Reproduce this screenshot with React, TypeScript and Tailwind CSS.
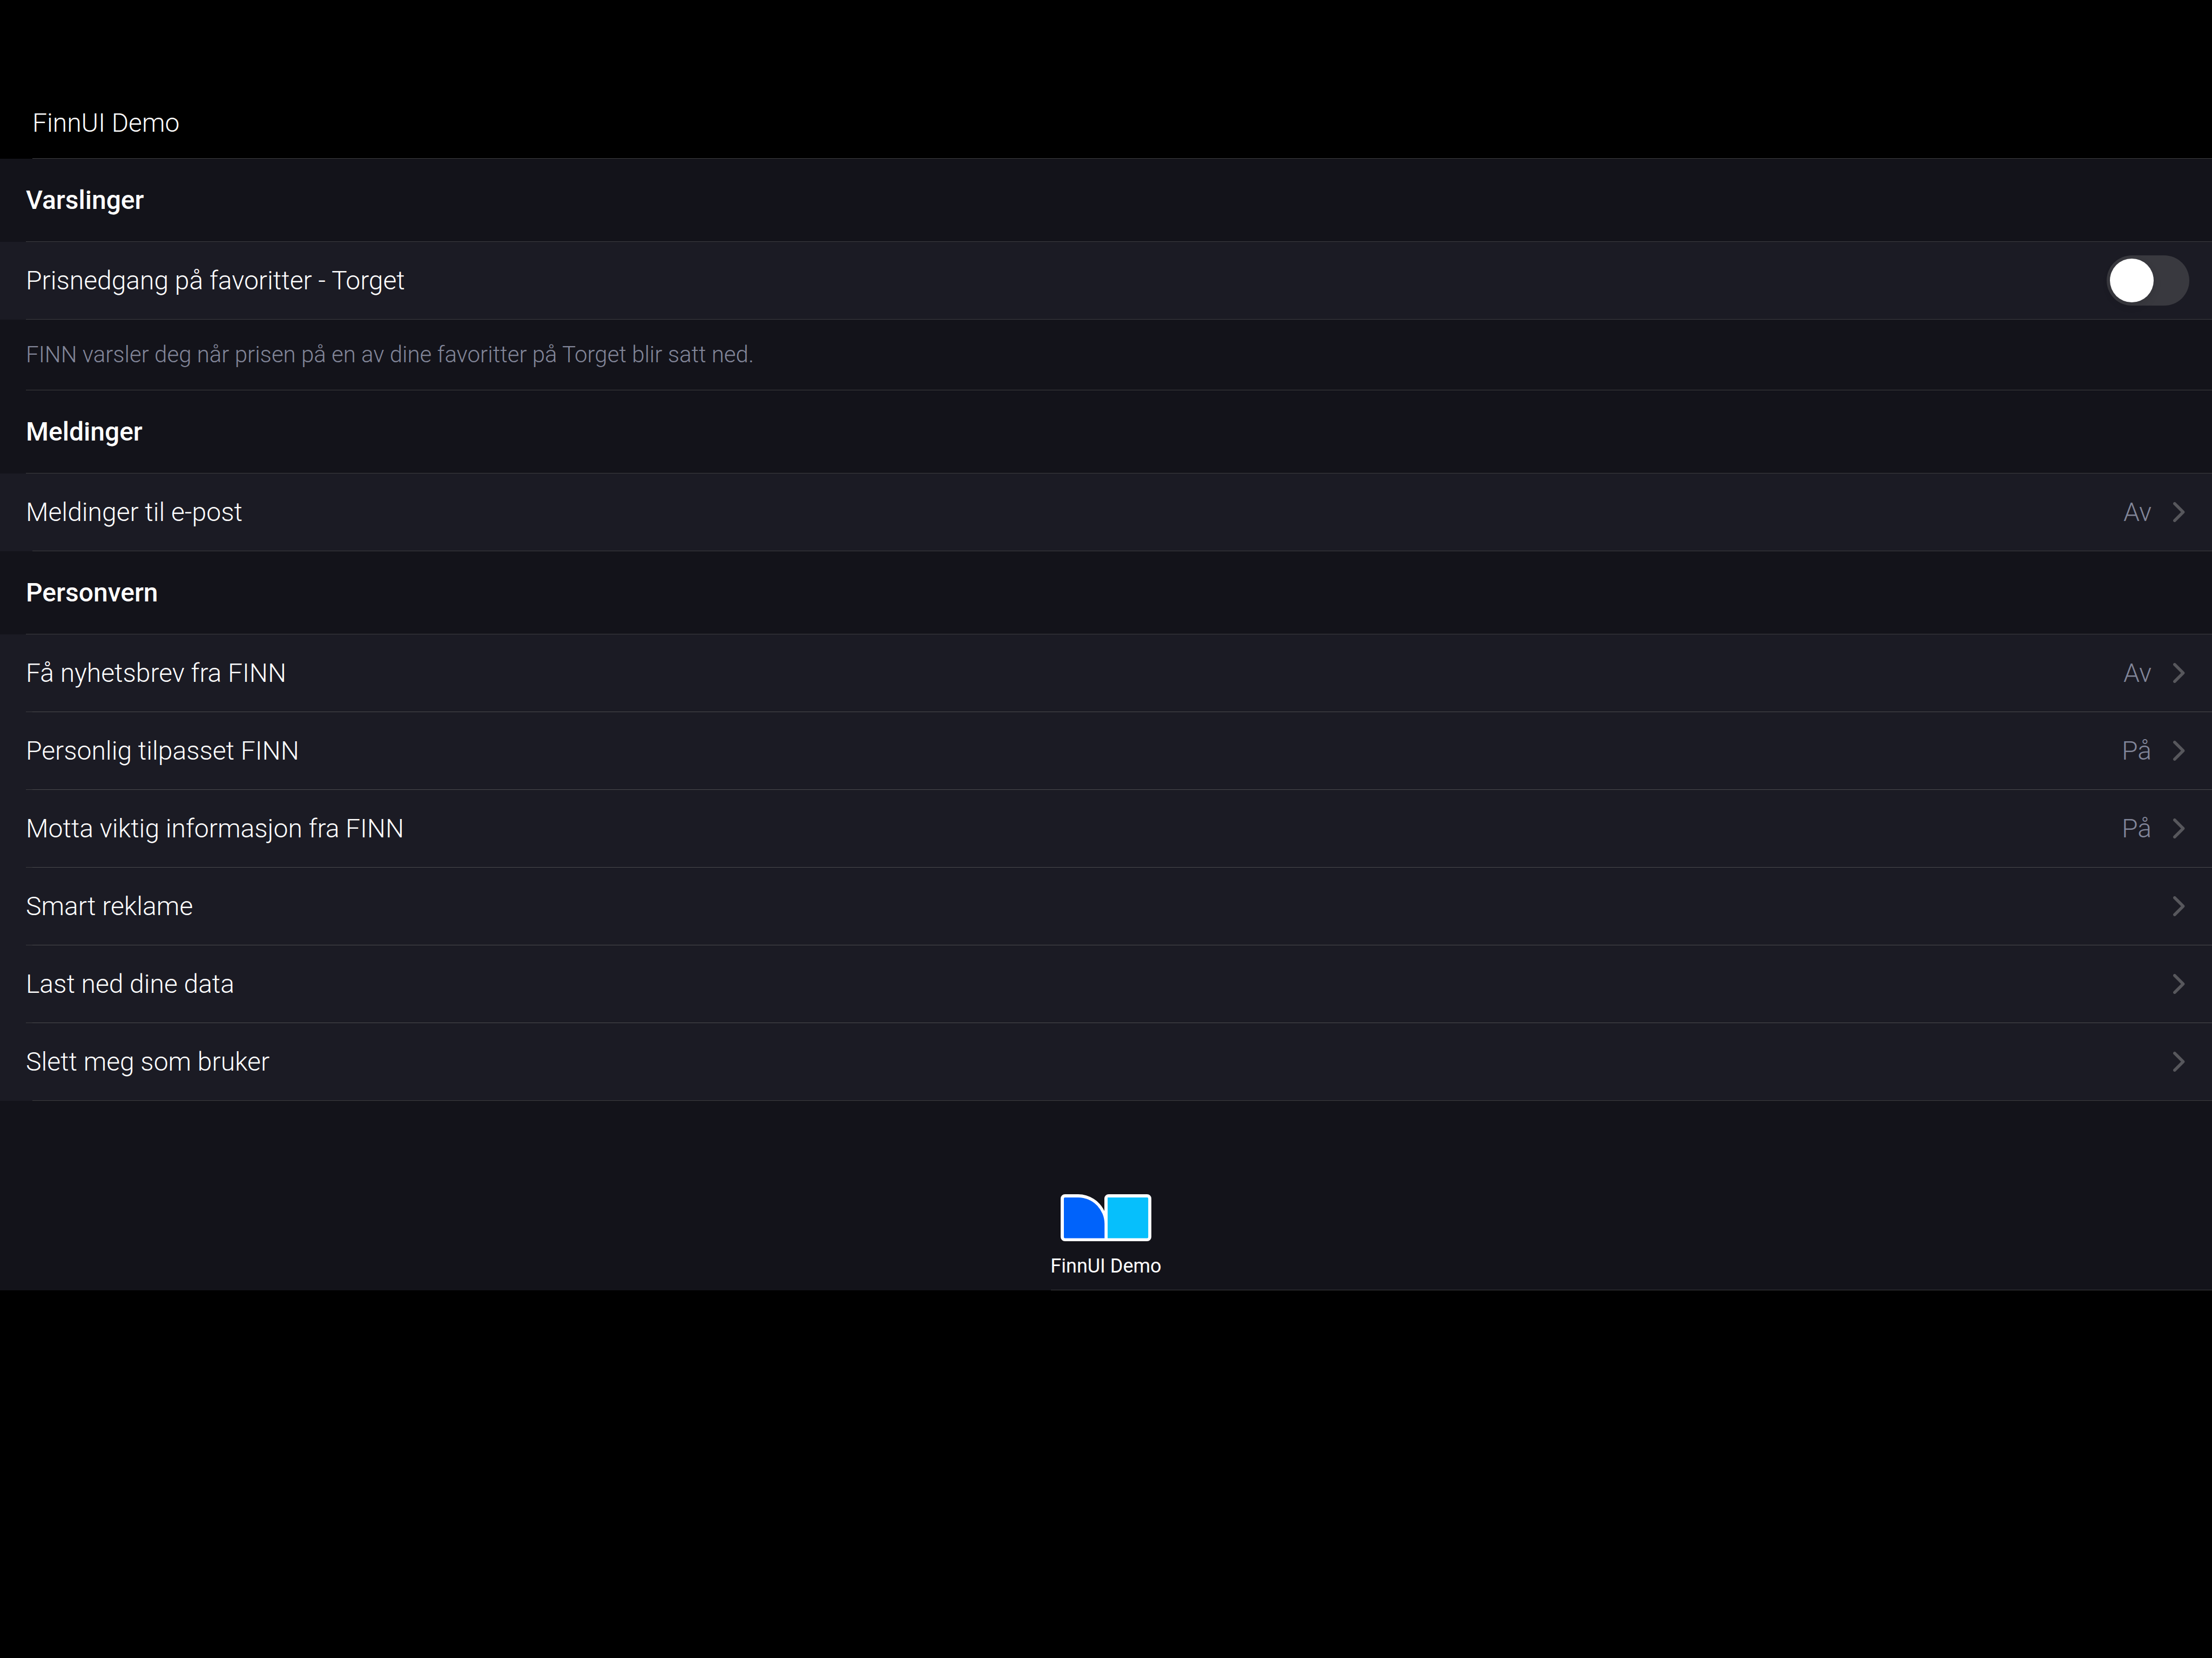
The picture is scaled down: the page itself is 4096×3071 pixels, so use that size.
import React from "react";

type Item = { label: string; value?: string };

const privacyItems: Item[] = [
  { label: "Få nyhetsbrev fra FINN", value: "Av" },
  { label: "Personlig tilpasset FINN", value: "På" },
  { label: "Motta viktig informasjon fra FINN", value: "På" },
  { label: "Smart reklame" },
  { label: "Last ned dine data" },
  { label: "Slett meg som bruker" },
];

function Chevron() {
  return (
    <svg viewBox="0 0 22 37" className="h-[37px] w-[22px] shrink-0" fill="none" aria-hidden="true">
      <path
        d="M2.8 2.8 18.6 18.5 2.8 34.2"
        stroke="#57575c"
        strokeWidth="5.5"
        strokeLinecap="round"
        strokeLinejoin="round"
      />
    </svg>
  );
}

/* Hairline under a section title or a plain row */
function Divider() {
  return <div className="ml-12 h-px bg-[#3d3d40]" />;
}

/* Hairline with the wider inset, used at the end of a group */
function InsetDivider() {
  return <div className="ml-[60px] h-px bg-[#3d3d40]" />;
}

/* Two overlapping hairlines between neighbouring rows */
function RowDivider() {
  return (
    <div className="ml-12 h-px bg-[#3d3d40]">
      <div className="ml-3 h-px bg-[#4b4b4e]" />
    </div>
  );
}

function SectionTitle({ children }: { children: React.ReactNode }) {
  return (
    <>
      <h2 className="flex h-[153px] items-center px-12 text-5xl leading-[60px] font-medium">{children}</h2>
      <Divider />
    </>
  );
}

function Row({ item, last }: { item: Item; last?: boolean }) {
  return (
    <li className="bg-[#1b1b24]">
      <button
        type="button"
        className="flex h-[143px] w-full items-center gap-10 pr-[50px] pl-12 text-left text-5xl leading-[60px] font-light"
      >
        <span className="grow">{item.label}</span>
        {item.value && <span className="text-[#828699]">{item.value}</span>}
        <Chevron />
      </button>
      {last ? <InsetDivider /> : <RowDivider />}
    </li>
  );
}

function Logo() {
  return (
    <svg viewBox="0 0 168 87" className="h-[87px] w-[168px]" aria-hidden="true">
      <path
        fill="#fff"
        d="M8 0H32.5A54.5 54.5 0 0 1 81 31V8A8 8 0 0 1 89 0H160A8 8 0 0 1 168 8V79A8 8 0 0 1 160 87H8A8 8 0 0 1 0 79V8A8 8 0 0 1 8 0Z"
      />
      <path fill="#0063fb" d="M8 6H32.5A49 49 0 0 1 81.3 55V81.5H8A2 2 0 0 1 6 79.5V8A2 2 0 0 1 8 6Z" />
      <path fill="#06bffc" d="M87 6H160A2 2 0 0 1 162.2 8V79.5A2 2 0 0 1 160 81.5H87Z" />
    </svg>
  );
}

export default function App() {
  return (
    <div className="min-h-screen bg-black font-['Roboto','Liberation_Sans',sans-serif] text-white">
      <header className="pt-[162px]">
        <h1 className="flex h-[131px] items-center px-[60px] text-5xl leading-[60px] font-light">FinnUI Demo</h1>
        <InsetDivider />
      </header>

      <main className="bg-[#13131a]">
        <section>
          <SectionTitle>Varslinger</SectionTitle>
          <div className="bg-[#1b1b24]">
            <label className="flex h-[143px] items-center justify-between pr-[42px] pl-12 text-5xl leading-[60px] font-light">
              Prisnedgang på favoritter - Torget
              <input
                type="checkbox"
                role="switch"
                className="flex h-[93px] w-[153px] appearance-none items-center rounded-full bg-[#39393f] p-1.5 before:size-[81px] before:rounded-full before:bg-white before:shadow-[0_6px_16px_rgba(0,0,0,0.1)] checked:justify-end checked:bg-[#0063fb]"
              />
            </label>
            <Divider />
          </div>
          <p className="flex h-[130px] items-center px-12 text-[42px] leading-[54px] font-light text-[#828699]">
            FINN varsler deg når prisen på en av dine favoritter på Torget blir satt ned.
          </p>
          <Divider />
        </section>

        <section>
          <SectionTitle>Meldinger</SectionTitle>
          <ul>
            <Row item={{ label: "Meldinger til e-post", value: "Av" }} last />
          </ul>
        </section>

        <section>
          <SectionTitle>Personvern</SectionTitle>
          <ul>
            {privacyItems.map((item, i) => (
              <Row key={item.label} item={item} last={i === privacyItems.length - 1} />
            ))}
          </ul>
        </section>

        <footer>
          <div className="flex flex-col items-center gap-[22px] pt-[173px] pb-5">
            <Logo />
            <p className="text-4xl leading-[48px]">FinnUI Demo</p>
          </div>
          <div className="ml-[47.5%] h-px bg-[#3d3d40]" />
        </footer>
      </main>
    </div>
  );
}
